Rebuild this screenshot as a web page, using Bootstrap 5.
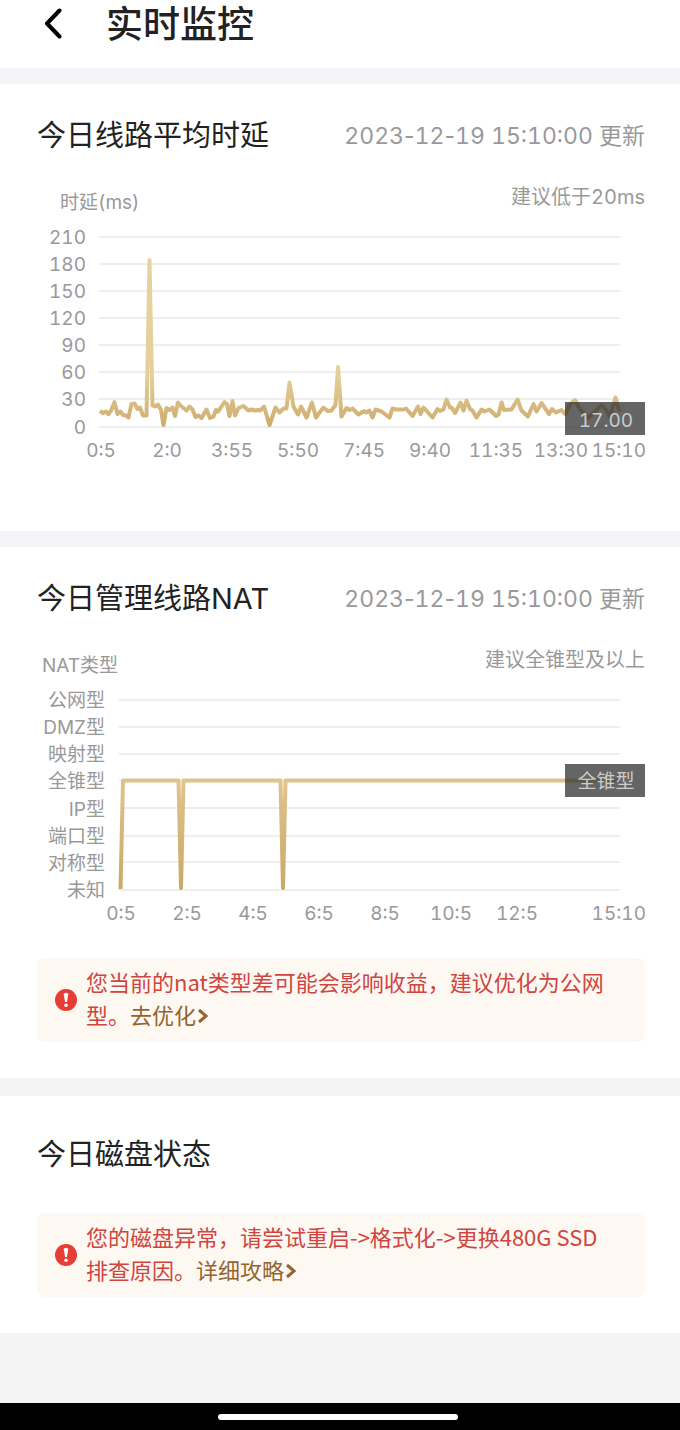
<!DOCTYPE html>
<html lang="zh-CN">
<head>
<meta charset="utf-8">
<meta name="viewport" content="width=device-width, initial-scale=1">
<title>实时监控</title>
<link href="https://cdn.jsdelivr.net/npm/bootstrap@5.3.0/dist/css/bootstrap.min.css" rel="stylesheet">
<style>
  body { font-family: Inter, "Noto Sans CJK SC", sans-serif; background: #f4f5f9; color: #2b2b2b; }
  .app-head { padding: 0 36px 18px 37px; }
  .app-title { font-size: 37px; line-height: 50px; font-weight: 500; color: #222; }
  .back-link { width: 69px; color: #000; }
  .panel { padding: 30px 35px 36px 37px; }
  .panel-row { min-height: 44px; }
  .panel-title { font-size: 29px; line-height: 44px; font-weight: 400; color: #222; }
  .stamp { font-size: 23px; line-height: 44px; color: #999; font-variant-numeric: tabular-nums; }
  .dash { font-variant-numeric: normal; }
  .chart { width: 100%; height: auto; margin-top: 22px; font-size: 19px; fill: #999; font-variant-numeric: tabular-nums; }
  .hint { font-size: 20px; }
  .grid-lines { stroke: #eee; stroke-width: 2; fill: none; }
  .series { fill: none; stroke-width: 4; stroke-linejoin: round; }
  .tip-box { fill: #323232; fill-opacity: .75; }
  .tip-text { fill: #ccc; }
  .notice { margin-top: 25px; padding: 7px 30px 7px 18px; gap: 9px; border-radius: 8px; background: #fef8f2; color: #d0453f; font-family: "Noto Sans CJK SC", sans-serif; font-size: 22px; line-height: 33px; }
  .notice p { padding-bottom: 4px; }
  .notice a { color: #94642f; }
  .notice a svg { vertical-align: baseline; }
  .lower { background: #f4f4f4; }
  .gap-md { margin-top: 16px; }
  .gap-lg { padding-top: 18px; }
  .disk { padding-top: 37px; }
  .disk .notice { margin-top: 36px; }
  .rest { height: 70px; }
  .home-bar { padding: 11px 4px 10px 0; background: #000; }
  .home-pill { width: 240px; height: 6px; background: #fff; }
</style>
</head>
<body>
<header class="app-head bg-white d-flex align-items-center">
  <a class="back-link d-flex" href="#" aria-label="返回">
    <svg width="30" height="34" viewBox="0 0 30 34" fill="none" stroke="currentColor" stroke-width="4" stroke-linecap="round" stroke-linejoin="round"><path d="M22.500 2.500 10 15.500 22.500 28.500"/></svg>
  </a>
  <h1 class="app-title mb-0">实时监控</h1>
</header>

<main>
  <section class="panel gap-md bg-white pb-0">
    <div class="panel-row d-flex justify-content-between align-items-center">
      <h2 class="panel-title mb-0">今日线路平均时延</h2>
      <span class="stamp">2023<span class="dash">-</span>12<span class="dash">-</span>19 15:10:00 更新</span>
    </div>
    <svg class="chart d-block" viewBox="37 180 608 351" role="img" aria-label="时延(ms)">
      <defs><linearGradient id="delayInk" gradientUnits="userSpaceOnUse" x1="0" y1="260" x2="0" y2="426"><stop offset="0" stop-color="#e5d3a0"/><stop offset=".7" stop-color="#e4cf99"/><stop offset="1" stop-color="#cfab6c"/></linearGradient></defs>
      <text x="60" y="209">时延(ms)</text>
      <text class="hint" x="645" y="204" text-anchor="end">建议低于20ms</text>
      <path class="grid-lines" d="M99 237H620M99 264H620M99 291H620M99 318H620M99 345H620M99 372H620M99 399H620M99 427H620"/>
      <g text-anchor="end">
        <text x="86" y="244">210</text><text x="86" y="271">180</text><text x="86" y="298">150</text><text x="86" y="325">120</text>
        <text x="86" y="352">90</text><text x="86" y="379">60</text><text x="86" y="406">30</text><text x="86" y="434">0</text>
      </g>
      <polyline class="series" stroke="url(#delayInk)" points="100,411 103,413 106,411.500 108.500,414 111,410.500 114.500,402 117.500,414 120.500,411.500 123,415 126,415.500 128.500,417.500 131.500,404 134.500,403.500 137.500,409 140,407.500 143,415.500 146.500,415.500 149.500,260 152.500,405.500 155,406.500 158,404.500 161,410 163.500,425 166.500,408 169.500,410 172.500,407.500 175,416 178,402.500 181,406 186.500,410.500 189.500,406.500 192.500,409.500 195.500,417 198.500,415.500 201.500,418 206.500,409.500 210,418 213.500,416.500 216,410 218,411.500 220.500,408 224.500,402 227,404 229.500,416 232.500,401 235,415.500 238.500,408 243.500,406 248.500,410.500 251.500,409.500 254.500,410.500 258,410 260.500,410.500 264,406.500 269.500,425 275.500,407.500 279.500,412.500 283.500,408.500 286.500,408.500 289.500,382.500 293.500,406.500 298,414.500 301,406.500 306.500,417.500 312,402.500 316,417.500 319.500,412.500 323.500,407.500 327.500,411 331.500,410.500 335.500,405 338,367 341.500,416.500 346.500,408 349.500,410 352.500,408.500 358.500,414.500 364,411 366,412.500 369.500,410.500 372.500,417.500 375.500,409.500 381.500,411.500 389.500,417.500 392.500,408.500 396.500,409.500 403.500,409.500 406,408.500 412.500,416 418,406.500 420.500,414 423.500,407.500 432.500,417.500 437.500,409 440,411 443.500,409.500 446.500,399.500 450,407.500 452,408 455,413 460.500,402.500 463.500,410.500 466.500,400.500 470,409 472.500,410.500 476.500,417.500 481.500,409.500 484.500,411.500 489.500,409.500 496,416 498.500,414.500 501.500,402.500 504,410 511.500,409.500 517.500,399.500 521.500,410.500 528,416.500 533.500,404 536.500,411.500 541.500,403 549,414 552,409 556,412.500 561.500,410 565,414 569.500,405 575,400 580.500,410 588.500,417.500 594,412.500 601.500,405 606.500,410.500 610,416.500 615.500,397.500 619.500,411.500"/>
      <g text-anchor="middle">
        <text x="101" y="457">0:5</text><text x="167" y="457">2:0</text><text x="232" y="457">3:55</text><text x="298" y="457">5:50</text>
        <text x="364" y="457">7:45</text><text x="430" y="457">9:40</text><text x="496" y="457">11:35</text><text x="561" y="457">13:30</text>
      </g>
      <text x="646" y="457" text-anchor="end">15:10</text>
      <rect class="tip-box" x="565" y="402" width="80" height="33"/>
      <text class="tip-text" x="606" y="427" text-anchor="middle">17.00</text>
    </svg>
  </section>

  <section class="panel gap-md bg-white">
    <div class="panel-row d-flex justify-content-between align-items-center">
      <h2 class="panel-title mb-0">今日管理线路NAT</h2>
      <span class="stamp">2023<span class="dash">-</span>12<span class="dash">-</span>19 15:10:00 更新</span>
    </div>
    <svg class="chart d-block" viewBox="37 643 608 290" role="img" aria-label="NAT类型">
      <defs><linearGradient id="natInk" gradientUnits="userSpaceOnUse" x1="0" y1="780" x2="0" y2="890"><stop offset="0" stop-color="#dfc48a"/><stop offset="1" stop-color="#cba768"/></linearGradient></defs>
      <text x="42" y="672">NAT类型</text>
      <text class="hint" x="645" y="667" text-anchor="end">建议全锥型及以上</text>
      <path class="grid-lines" d="M119 700H620M119 727H620M119 754H620M119 781H620M119 808H620M119 836H620M119 862H620M119 890H620"/>
      <g text-anchor="end">
        <text x="105" y="707">公网型</text><text x="105" y="734">DMZ型</text><text x="105" y="761">映射型</text><text x="105" y="788">全锥型</text>
        <text x="105" y="816">IP型</text><text x="105" y="843">端口型</text><text x="105" y="870">对称型</text><text x="105" y="897">未知</text>
      </g>
      <polyline class="series" stroke="url(#natInk)" points="120.500,889 123,780.500 178.500,780.500 181,888 183.500,780.500 280.500,780.500 283,888 285.500,780.500 620,780.500"/>
      <g text-anchor="middle">
        <text x="121" y="920">0:5</text><text x="187" y="920">2:5</text><text x="253" y="920">4:5</text><text x="319" y="920">6:5</text>
        <text x="385" y="920">8:5</text><text x="451" y="920">10:5</text><text x="517" y="920">12:5</text>
      </g>
      <text x="646" y="920" text-anchor="end">15:10</text>
      <rect class="tip-box" x="565" y="764" width="80" height="33"/>
      <text class="tip-text" x="606" y="788" text-anchor="middle">全锥型</text>
    </svg>
    <div class="notice d-flex align-items-center" role="alert">
      <svg class="flex-shrink-0" width="22" height="22" viewBox="0 0 22 22" aria-hidden="true"><circle cx="11" cy="11" r="11" fill="#e83d35"/><path d="M8.800 5.300Q8.800 3.800 11 3.800T13.200 5.300L12 13H10Z" fill="#fff"/><circle cx="11" cy="16.300" r="1.700" fill="#fff"/></svg>
      <p class="mb-0">您当前的nat类型差可能会影响收益，建议优化为公网型。<a class="text-decoration-none" href="#">去优化<svg width="16" height="16" viewBox="0 0 16 16" fill="none" stroke="currentColor" stroke-width="3" aria-hidden="true"><path d="M3 2 10 8 3 14"/></svg></a></p>
    </div>
  </section>

  <div class="lower gap-lg">
    <section class="panel disk bg-white">
      <div class="panel-row d-flex align-items-center">
        <h2 class="panel-title mb-0">今日磁盘状态</h2>
      </div>
      <div class="notice d-flex align-items-center" role="alert">
        <svg class="flex-shrink-0" width="22" height="22" viewBox="0 0 22 22" aria-hidden="true"><circle cx="11" cy="11" r="11" fill="#e83d35"/><path d="M8.800 5.300Q8.800 3.800 11 3.800T13.200 5.300L12 13H10Z" fill="#fff"/><circle cx="11" cy="16.300" r="1.700" fill="#fff"/></svg>
        <p class="mb-0">您的磁盘异常，请尝试重启-&gt;格式化-&gt;更换480G SSD排查原因。<a class="text-decoration-none" href="#">详细攻略<svg width="16" height="16" viewBox="0 0 16 16" fill="none" stroke="currentColor" stroke-width="3" aria-hidden="true"><path d="M3 2 10 8 3 14"/></svg></a></p>
      </div>
    </section>
    <div class="rest"></div>
  </div>
</main>

<footer class="home-bar">
  <div class="home-pill rounded-pill mx-auto"></div>
</footer>
<script src="https://cdn.jsdelivr.net/npm/bootstrap@5.3.0/dist/js/bootstrap.bundle.min.js"></script>
</body>
</html>
